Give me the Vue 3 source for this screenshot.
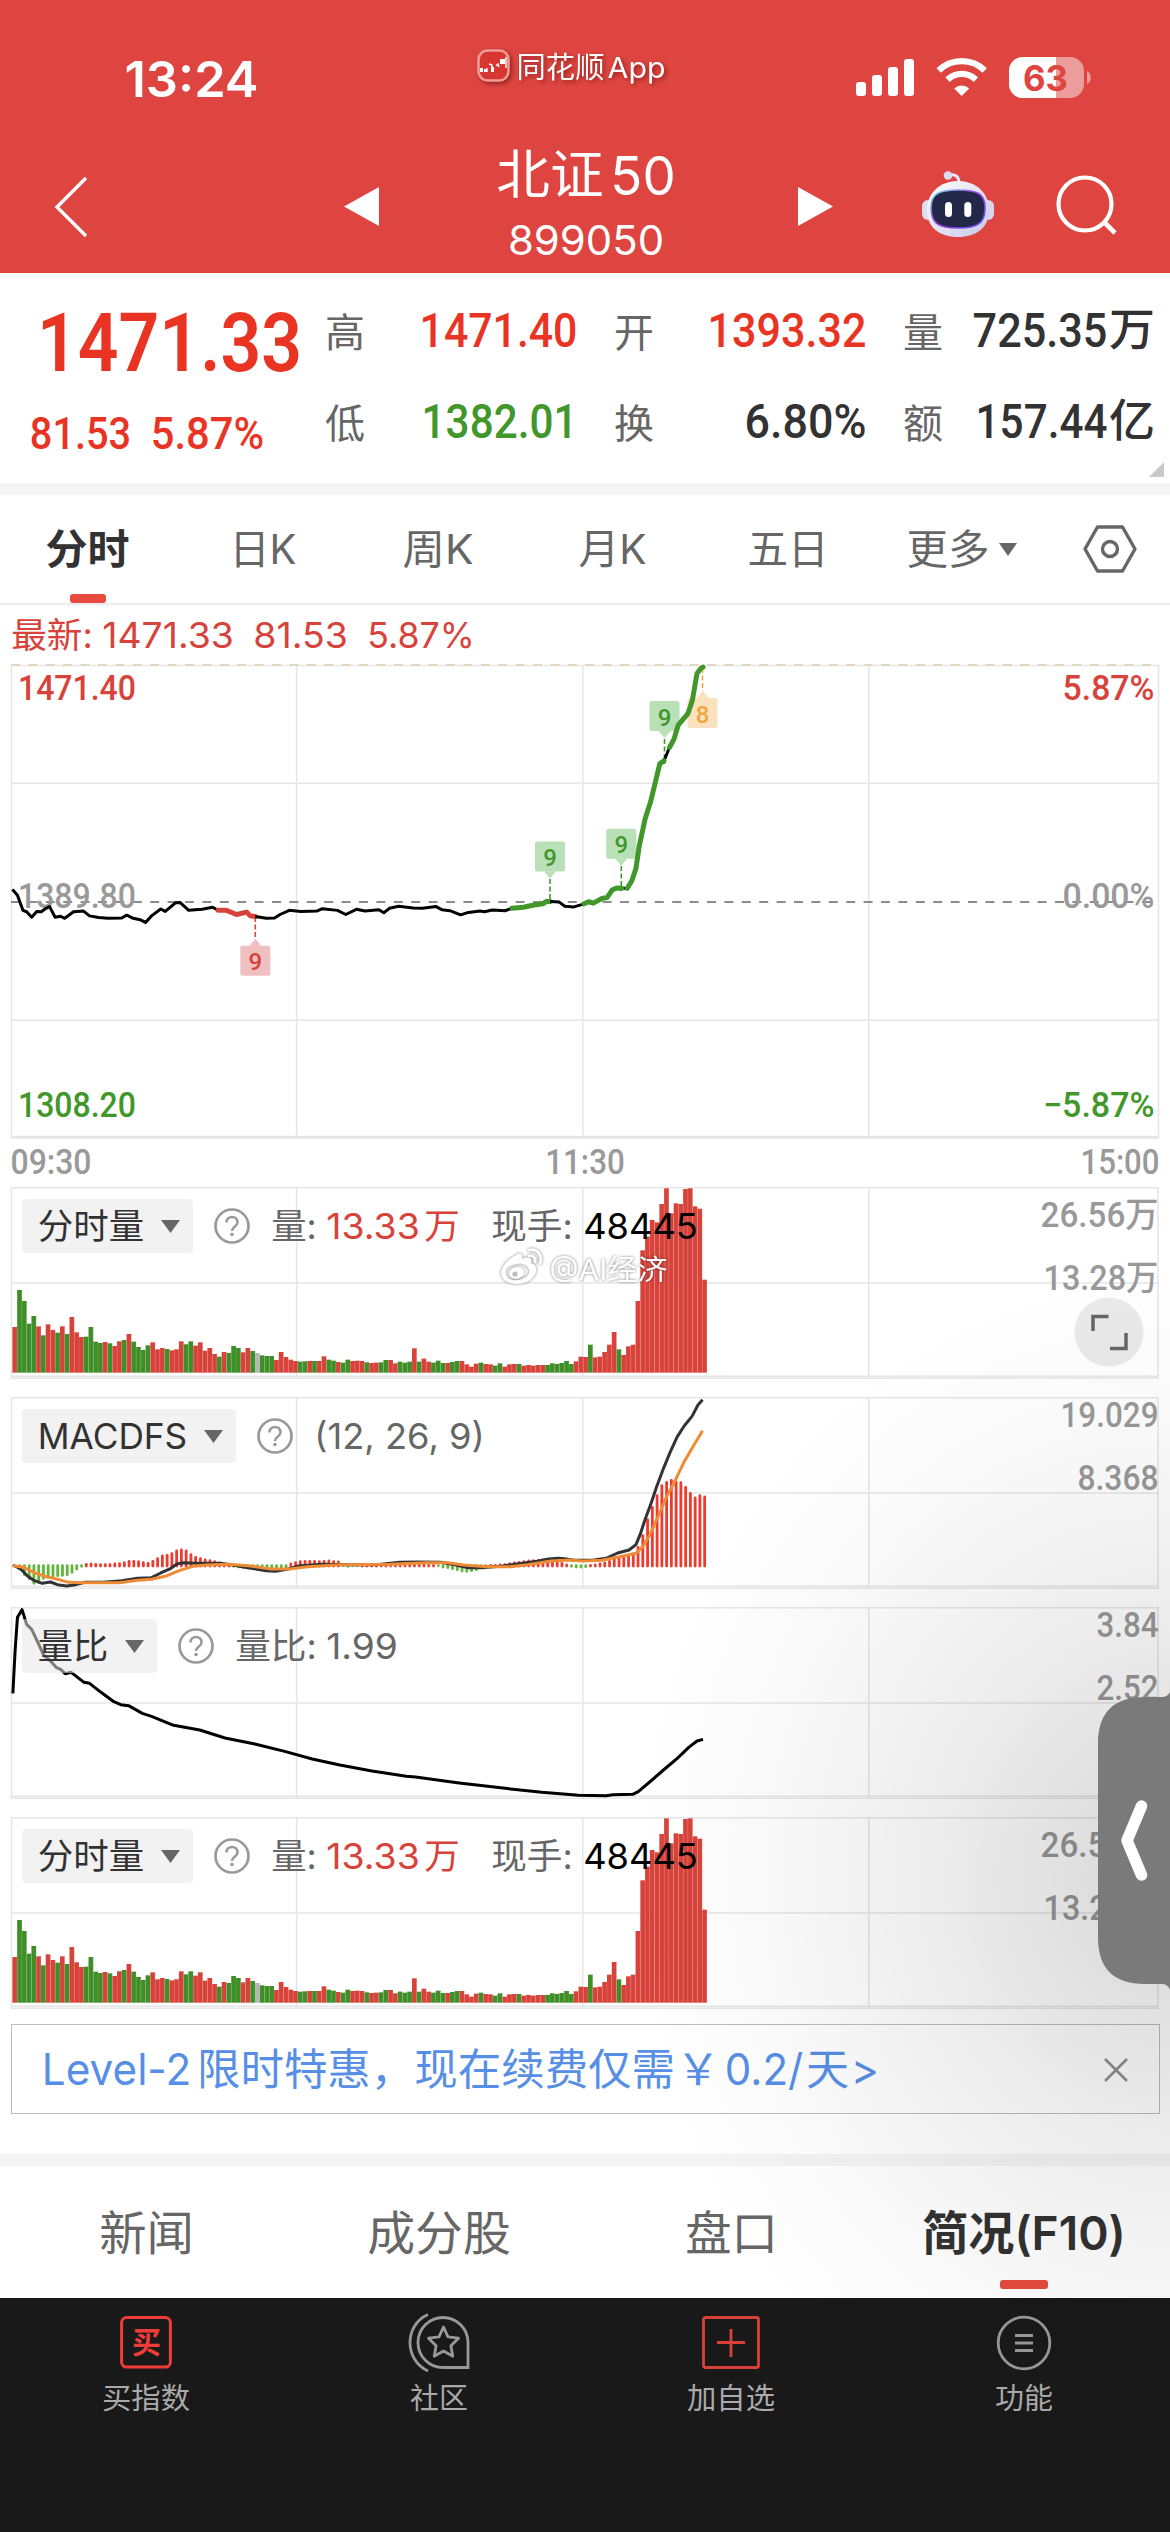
<script setup>
import { h } from 'vue'

// Text fitted to an exact width; the box height equals the cap height so rows align on it.
const Fit = (p) => {
  const size = Number(p.s)
  const b = p.b === undefined ? size * 0.05 : Number(p.b)
  const cap = size * 0.72
  return h('svg', { class: 'fit', width: p.w, height: cap }, [
    h('text', {
      x: -b, y: cap, 'font-size': size, fill: 'currentColor',
      textLength: Number(p.w) + 2 * b, lengthAdjust: 'spacingAndGlyphs',
    }, p.t),
  ])
}
Fit.props = ['t', 'w', 's', 'b']

const stats = [
  { k: '高', v: '1471.40', w: 153, c: 'up' },
  { k: '开', v: '1393.32', w: 154, c: 'up' },
  { k: '量', v: '725.35', w: 130, u: '万', c: 'ink' },
  { k: '低', v: '1382.01', w: 151, c: 'down' },
  { k: '换', v: '6.80%', w: 117, c: 'ink' },
  { k: '额', v: '157.44', w: 127, u: '亿', c: 'ink' },
]

const tabs = [
  { t: '分时', w: 81, on: true }, { t: '日K', w: 64 }, { t: '周K', w: 68 },
  { t: '月K', w: 65 }, { t: '五日', w: 78 }, { t: '更多', w: 80, more: true },
]
const infoTabs = [
  { t: '新闻', w: 91 }, { t: '成分股', w: 140 }, { t: '盘口', w: 89 }, { t: '简况(F10)', w: 200, on: true },
]

const segments = [
  ['k', '27,695 38,712 50,756 58,760 69,776 80,759 90,760 100,750 108,745 120,776 132,773 141,779 160,760 182,758 195,772 215,777 235,779 265,778 276,770 290,779 305,783 317,791 330,772 350,752 360,759 382,734 392,733 411,756 440,753 463,747 475,756'],
  ['r', '475,756 493,756 515,768 537,761 545,772 556,774'],
  ['k', '556,774 580,779 598,778 610,768 630,756 655,759 690,758 702,751 735,756 753,768 776,753 795,758 825,754 836,763 848,750 868,744 900,749 920,750 950,745 962,754 980,757 1003,769 1020,762 1045,758 1055,760 1072,755 1100,757 1115,750'],
  ['g', '1115,750 1140,747 1160,741 1182,737 1190,730 1198,730'],
  ['k', '1198,730 1218,732 1230,744 1250,746 1272,737'],
  ['k', '1354,692 1366,692'],
  ['k', '1446,322 1458,283'],
  ['g', '1272,737 1282,731 1292,735 1312,721 1322,719 1333,697 1343,691 1354,692'],
  ['g', '1366,692 1376,670 1385,634 1392,570 1405,490 1417,440 1427,385 1437,330 1446,322'],
  ['g', '1458,283 1468,258 1477,218 1498,185 1508,145 1518,68 1526,54 1531,50'],
]

// x, box top, pointer direction, dashed stem range
const marks = [
  { x: 550, y: 177.5, up: false, a: 215, b: 237, n: '9', c: 'mg' },
  { x: 621.3, y: 164.7, up: false, a: 202, b: 224, n: '9', c: 'mg' },
  { x: 664.5, y: 37, up: false, a: 75, b: 97, n: '9', c: 'mg' },
  { x: 702.5, y: 34, up: true, a: 4, b: 27, n: '8', c: 'mo' },
  { x: 255.3, y: 281.8, up: true, a: 253, b: 275, n: '9', c: 'mr' },
]

const tops = [471, 360, 393, 461, 438, 469, 496, 463, 480, 488, 469, 492, 441, 487, 501, 500, 471, 515, 519, 516,
  520, 528, 514, 510, 492, 515, 531, 540, 526, 517, 538, 534, 537, 541, 538, 514, 523, 514, 527, 517,
  542, 534, 552, 560, 546, 549, 528, 534, 547, 534, 543, 549, 556, 558, 558, 570, 546, 561, 569, 573,
  575, 574, 573, 573, 573, 559, 569, 572, 576, 578, 569, 573, 572, 573, 577, 579, 578, 577, 570, 570,
  580, 575, 578, 575, 535, 575, 566, 575, 578, 572, 579, 579, 576, 573, 573, 583, 590, 581, 578, 582,
  583, 587, 580, 590, 583, 582, 582, 587, 585, 587, 585, 585, 585, 580, 582, 579, 573, 582, 574, 560,
  561, 524, 562, 560, 546, 524, 486, 538, 555, 529, 524, 393, 241, 200, 150, 157, 102, 55, 130, 100,
  102, 57, 55, 109, 116, 329]
const kinds = 'RGGGGRGRRGRGRRRGGGGRGRRGRGGGGRRRGRRRGGRRRRRGRGGGRRGNGGGRRRRRGGRGRRGGRGGRRRGRRGGRRGGGRGRRGGGRGGRRRRGRRGGRRRGRRRRRGGGGGGRRRGRRRRRGRRRRRRRRRRRRRRRRR'
const STEP = 4.757
const volume = tops.map((t, i) => ({
  x: 12.4 + i * STEP, y: t / 3 - 17, hgt: (608 - t) / 3,
  c: kinds[i] === 'G' ? '#3f8e27' : kinds[i] === 'N' ? '#b5b5b5' : '#d7433a',
}))

const macdTips = [0, 1200, 1217, 1229, 1243, 1240, 1228, 1225, 1221, 1220, 1219, 1217, 1210, 1200, 1192, 1181, 1180, 1181, 1182, 1182,
  1182, 1180, 1179, 1176, 1172, 1172, 1173, 1176, 1178, 1172, 1164, 1156, 1154, 1149, 1141, 1138, 1141, 1152, 1160, 1164,
  1168, 1170, 1173, 1177, 1180, 1184, 1192, 1194, 1196, 1197, 1199, 1201, 1203, 1204, 1205, 1204, 1200, 1194, 1180, 1176,
  1173, 1172, 1172, 1172, 1173, 1172, 1171, 1173, 1174, 1190, 1192, 1190, 1189, 1184, 1184, 1184, 1184, 1184, 1184, 1184,
  1184, 1183, 1183, 1183, 1183, 1183, 1183, 1184, 1184, 1190, 1194, 1196, 1199, 1202, 1206, 1207, 1205, 1202, 1194, 1191,
  1184, 1184, 1183, 1182, 1179, 1177, 1175, 1173, 1171, 1170, 1169, 1168, 1168, 1170, 1172, 1178, 1183, 1192, 1194, 1194,
  1193, 1184, 1183, 1180, 1177, 1172, 1165, 1162, 1160, 1155, 1150, 1130, 1095, 1047, 1010, 975, 945, 935, 929, 934,
  936, 950, 968, 982, 975, 979]
const macdBars = macdTips.map((t, i) => ({ x: 14.9 + i * STEP, t, neg: t > 1187 })).filter((d) => d.t)
  .map((d) => ({ x: d.x, y1: (d.neg ? 1187 : 1188) / 3 - 227, y2: (d.neg ? d.t - 3 : d.t + 2) / 3 - 227, c: d.neg ? '#62b63a' : '#ed3b2f' }))

const dif = '28,1185 45,1197 60,1218 75,1232 92,1240 110,1236 125,1244 145,1248 165,1244 185,1237 225,1237 265,1232 300,1225 330,1223 350,1209 370,1197 385,1182 400,1178 430,1180 480,1180 510,1186 540,1193 580,1202 600,1204 625,1198 650,1188 700,1183 760,1184 820,1184 870,1177 910,1176 960,1177 990,1184 1020,1193 1050,1193 1090,1189 1130,1181 1170,1174 1195,1167 1215,1165 1230,1166 1250,1171 1290,1171 1320,1165 1345,1149 1370,1140 1385,1124 1395,1090 1405,1048 1418,1000 1430,950 1445,895 1460,845 1475,800 1490,768 1507,739 1520,705 1530,689'
const dea = '28,1187 50,1191 75,1208 95,1218 120,1226 150,1237 180,1238 260,1238 300,1231 330,1228 360,1219 390,1202 420,1189 450,1185 500,1183 540,1187 590,1197 630,1197 670,1190 740,1184 850,1183 930,1178 975,1178 1010,1185 1060,1190 1110,1190 1150,1184 1200,1173 1240,1170 1270,1173 1310,1171 1350,1160 1385,1150 1400,1130 1415,1095 1430,1050 1450,985 1470,933 1490,875 1510,828 1530,782'
const ratio = '28,310 33,180 38,82 48,59 58,103 69,118 85,165 95,195 110,213 122,232 132,238 142,251 155,247 183,277 195,280 220,307 248,335 263,344 280,347 310,370 330,379 378,406 435,420 490,444 555,462 620,484 680,507 740,525 810,543 885,559 905,561 1000,579 1100,595 1180,607 1260,616 1320,617 1335,614 1378,613 1390,605 1420,570 1450,534 1475,505 1500,472 1518,453 1531,448'

const panels = [
  { id: 'vol', name: '分时量', nw: 104, hi: ['26.56万', 115], lo: ['13.28万', 112], zoom: true, mark: true },
  { id: 'macd', name: 'MACDFS', nw: 147, hi: ['19.029', 95], lo: ['8.368', 78] },
  { id: 'ratio', name: '量比', nw: 68, hi: ['3.84', 59], lo: ['2.52', 59] },
  { id: 'vol', name: '分时量', nw: 104, hi: ['26.56万', 115], lo: ['13.28万', 112] },
]
</script>

<template>
  <div class="page">
    <header class="head">
      <div class="status">
        <Fit class="clock" t="13:24" w="129" s="50" />
        <div class="source">
          <svg width="34" height="34" viewBox="0 0 34 34">
            <rect x="1.5" y="1.5" width="30" height="30" rx="9" fill="#d83631" stroke="#ef9c98" stroke-width="2.6" />
            <path d="M3 19h3v4H3zM7 20h3v3H7zM14 18h3v5h-3zM23 10h5v5h-5z" fill="#fff" />
            <path d="M10 23V19M12 15l3 1v3M19 17l2-2 1 3M29 8v11" stroke="#fff" stroke-width="1.4" fill="none" />
          </svg>
          <Fit t="同花顺" w="85" s="29" /><Fit t="App" w="55" s="29" />
        </div>
        <svg class="sys" width="236" height="42" viewBox="0 0 236 42">
          <g fill="#fff">
            <rect x="0" y="25" width="10" height="14" rx="3" /><rect x="16" y="18" width="10" height="21" rx="3" />
            <rect x="32" y="10" width="10" height="29" rx="3" /><rect x="48" y="2" width="10" height="37" rx="3" />
            <path d="M105.7 39l-7.5-7.5a11 11 0 0 1 15 0z" />
          </g>
          <g fill="none" stroke="#fff" stroke-width="6.4">
            <path d="M82.7 13.5a33 33 0 0 1 46 0" /><path d="M91.5 22.6a20.5 20.5 0 0 1 28.4 0" />
          </g>
          <rect x="153" y="0" width="75" height="41" rx="14" fill="#ec9c9a" />
          <path d="M200 0H167a14 14 0 0 0-14 14v13a14 14 0 0 0 14 14h33z" fill="#fff" />
          <path d="M231 14c5 2 5 11 0 13z" fill="#ec9c9a" />
          <text x="167" y="33.6" font-size="35.5" font-weight="700" fill="#de4540" textLength="45" lengthAdjust="spacingAndGlyphs">63</text>
        </svg>
      </div>
      <div class="titlebar">
        <svg class="back" width="36" height="62" viewBox="0 0 36 62"><path d="M32 2L3 31l29 29" fill="none" stroke="#fff" stroke-width="3.4" /></svg>
        <svg class="prev" width="36" height="40"><path d="M35 0v39L0 19.5z" fill="#fff" /></svg>
        <div class="name">
          <div class="name-row"><Fit t="北证" w="102" s="53" /><Fit t="50" w="60" s="53.5" /></div>
          <Fit t="899050" w="152" s="41.5" />
        </div>
        <svg class="next" width="36" height="40"><path d="M0 0v39L35 19.5z" fill="#fff" /></svg>
        <svg class="bot" width="74" height="68" viewBox="0 0 74 68">
          <defs>
            <linearGradient id="shell" x1="0" y1="0" x2="1" y2="1"><stop offset="0" stop-color="#fff" /><stop offset=".5" stop-color="#e4e3f6" /><stop offset="1" stop-color="#c9c9ea" /></linearGradient>
            <linearGradient id="rim" x1="0" y1="0" x2="1" y2="1"><stop offset="0" stop-color="#7ce6f5" /><stop offset=".5" stop-color="#9a3ee0" /><stop offset="1" stop-color="#5a50f0" /></linearGradient>
          </defs>
          <path d="M29 5c6-1 9 2 9 8" fill="none" stroke="#e8e8f8" stroke-width="3" /><circle cx="27" cy="5.5" r="4.3" fill="#dcdcf2" />
          <rect x="1" y="30" width="12" height="20" rx="6" fill="#dedef2" /><rect x="61" y="30" width="12" height="20" rx="6" fill="#d6d6ee" />
          <path d="M37 11c18 0 31 12 31 29 0 18-13 27-31 27S6 58 6 40c0-17 13-29 31-29z" fill="url(#shell)" />
          <path d="M37 20c20 0 27 4 27 18 0 15-7 20-27 20s-27-5-27-20c0-14 7-18 27-18z" fill="#232748" stroke="url(#rim)" stroke-width="1.6" />
          <rect x="24" y="32" width="7" height="15" rx="3.5" fill="#fff" /><rect x="43.3" y="32" width="7" height="15" rx="3.5" fill="#fff" />
        </svg>
        <svg class="find" width="62" height="62" viewBox="0 0 62 62"><circle cx="29" cy="29" r="26.5" fill="none" stroke="#fff" stroke-width="4.2" /><path d="M48 47l11 11" stroke="#fff" stroke-width="4.6" /></svg>
      </div>
    </header>

    <section class="quote num">
      <div class="last up">
        <Fit class="price" t="1471.33" w="261" s="81.5" b="2" />
        <div class="delta"><Fit t="81.53" w="97" s="43.5" /><Fit t="5.87%" w="109" s="43.5" /></div>
      </div>
      <div class="stats">
        <div v-for="s in stats" :key="s.k" class="stat">
          <Fit class="key" :t="s.k" w="38" s="40" b="1" />
          <div class="val" :class="s.c">
            <Fit :t="s.v" :w="s.w" s="48" /><Fit v-if="s.u" class="unit" :t="s.u" w="44" s="45" b="1" />
          </div>
        </div>
      </div>
      <svg class="corner" width="15" height="15"><path d="M15 0v15H0z" fill="#c9c9c9" /></svg>
    </section>

    <nav class="tabs">
      <div v-for="t in tabs" :key="t.t" class="tab" :class="{ on: t.on }">
        <Fit :t="t.t" :w="t.w" s="41" b="1.5" />
        <svg v-if="t.more" class="caret" width="18" height="13"><path d="M0 0h18l-9 13z" fill="#666" /></svg>
      </div>
      <div class="gear">
        <svg width="54" height="48" viewBox="0 0 54 48"><path d="M14.5 2h25L52 24 39.5 46h-25L2 24z" fill="none" stroke="#666" stroke-width="3.4" stroke-linejoin="round" /><circle cx="27" cy="24" r="7.5" fill="none" stroke="#666" stroke-width="3.4" /></svg>
      </div>
    </nav>

    <div class="latest">
      <Fit t="最新:" w="78" s="35.5" /><Fit class="a" t="1471.33" w="128" s="35.5" /><Fit class="b" t="81.53" w="91" s="35.5" /><Fit class="b" t="5.87%" w="104" s="35.5" />
    </div>

    <svg class="chart num" width="1170" height="475">
      <g class="grid">
        <path d="M11.5 119.3H1159M11.5 356.3H1159M296.6 1V474M582.7 1V474M868.8 1V474" />
        <path d="M11.5 1.5H1158.5V474H11.5zM11.5 472.5H1158.5" />
      </g>
      <path d="M11 .8H1158" stroke="#dccba6" stroke-width="1.2" stroke-dasharray="9 8.4" />
      <path d="M11 238H1153" stroke="#8c8c8c" stroke-width="2" stroke-dasharray="9 8.4" />
      <g font-size="35.3" class="lab">
        <text x="18" y="36" fill="#d7433a" textLength="118" lengthAdjust="spacingAndGlyphs">1471.40</text>
        <text x="18" y="243.5" fill="#999" textLength="118" lengthAdjust="spacingAndGlyphs">1389.80</text>
        <text x="18" y="452.5" fill="#41972a" textLength="118" lengthAdjust="spacingAndGlyphs">1308.20</text>
        <text x="1062.5" y="36" fill="#d7433a" textLength="92" lengthAdjust="spacingAndGlyphs">5.87%</text>
        <text x="1062.5" y="243.5" fill="#999" textLength="92" lengthAdjust="spacingAndGlyphs">0.00%</text>
        <text x="1043" y="452.5" fill="#41972a" textLength="111.5" lengthAdjust="spacingAndGlyphs">−5.87%</text>
      </g>
      <g v-for="m in marks" :key="m.x" :class="m.c">
        <path class="stem" :d="`M${m.x} ${m.a}V${m.b + (m.up ? 0 : 3)}`" />
        <rect :x="m.x - 15" :y="m.y" width="30" height="30" rx="2" />
        <path class="tip" :d="m.up ? `M${m.x - 6} ${m.y}l6 -7l6 7z` : `M${m.x - 6} ${m.y + 30}l6 7l6 -7z`" />
        <text class="dig" :x="m.x" :y="m.y + 24.5" font-size="24" text-anchor="middle">{{ m.n }}</text>
      </g>
      <g transform="translate(0 -14) scale(.45918 .3444)">
        <polyline v-for="(s, i) in segments" :key="i" :class="'s' + s[0]" :points="s[1]" />
      </g>
    </svg>
    <div class="axis num"><Fit t="09:30" w="78" s="35.5" b="1.5" /><Fit t="11:30" w="76" s="35.5" /><Fit t="15:00" w="76" s="35.5" b="1.5" /></div>

    <section v-for="(p, i) in panels" :key="i" class="panel">
      <svg class="plot" width="1170" height="192">
        <g class="grid">
          <path d="M11.5 96H1159M296.6 1V191M582.7 1V191M868.8 1V191" />
          <path d="M11.5 .8H1158V191.3H11.5zM11.5 189.3H1158" />
        </g>
        <g v-if="p.id === 'vol'">
          <rect v-for="(v, j) in volume" :key="j" :x="v.x" :y="v.y" :width="STEP" :height="v.hgt" :fill="v.c" />
          <path v-for="(v, j) in volume" :key="'l' + j" :d="`M${v.x + STEP} ${v.y + 1}v${v.hgt - 1}`" stroke="#fff" stroke-opacity=".12" />
        </g>
        <template v-if="p.id === 'macd'">
          <path v-for="(m, j) in macdBars" :key="j" :d="`M${m.x} ${m.y1}V${m.y2}`" :stroke="m.c" stroke-width="2.8" stroke-linecap="round" />
          <g transform="translate(0 -227) scale(.45918 .33333)">
            <polyline class="ind dif" :points="dif" /><polyline class="ind dea" :points="dea" />
          </g>
        </template>
        <g v-if="p.id === 'ratio'" transform="translate(0 -17) scale(.45918 .33333)"><polyline class="ind" :points="ratio" /></g>
        <g class="num lab" font-size="35.5" fill="#999">
          <text :x="1155.5 - p.hi[1]" :y="p.id === 'vol' ? 39.7 : 30.2" :textLength="p.hi[1] + 3" lengthAdjust="spacingAndGlyphs">{{ p.hi[0] }}</text>
          <text :x="1155.5 - p.lo[1]" :y="p.id === 'vol' ? 102.7 : 93" :textLength="p.lo[1] + 3" lengthAdjust="spacingAndGlyphs">{{ p.lo[0] }}</text>
        </g>
      </svg>
      <div class="legend">
        <div class="chip"><Fit :t="p.name" :w="p.nw" s="35.5" b="1.2" /><svg width="19" height="13"><path d="M0 0h19l-9.5 13z" fill="#666" /></svg></div>
        <svg class="help" width="38" height="38" viewBox="0 0 38 38"><circle cx="19" cy="19" r="16.5" fill="none" stroke="#999" stroke-width="2.7" /><path d="M13.5 15.5c0-7.5 11-7.5 11 0 0 4-5.5 4-5.5 8.5" fill="none" stroke="#999" stroke-width="2.5" /><circle cx="19" cy="27.5" r="1.8" fill="#999" /></svg>
        <template v-if="p.id === 'vol'">
          <Fit t="量:" w="42" s="35.5" /><Fit class="red g1" t="13.33" w="90" s="35.5" /><Fit class="red g2" t="万" w="32" s="35.5" />
          <Fit class="g3" t="现手:" w="78" s="35.5" /><Fit class="blk g4" t="48445" w="111" s="35.5" />
        </template>
        <Fit v-if="p.id === 'macd'" t="(12, 26, 9)" w="167" s="35.5" />
        <template v-if="p.id === 'ratio'"><Fit t="量比:" w="78" s="35.5" /><Fit class="g1" t="1.99" w="68" s="35.5" /></template>
      </div>
      <svg v-if="p.zoom" class="expand" width="70" height="70" viewBox="0 0 70 70"><circle cx="35" cy="35" r="34.5" fill="#eaeaea" /><path d="M19 34V19.5h15.5M52 36v15.5H36" fill="none" stroke="#666" stroke-width="3.5" /></svg>
      <div v-if="p.mark" class="wm">
        <svg width="44" height="38" viewBox="0 0 44 38">
          <g fill="#fff"><path fill-rule="evenodd" d="M16 8c4-3 8-1 6 4 6-3 11-1 9 4 4 1 6 4 5 9-2 7-9 12-19 12C7 37 1 32 1 26 1 20 8 12 16 8zM17 17C9 18 5 22 6 27c1 5 6 7 12 6 8-1 12-6 11-10-1-4-6-7-12-6z" /><path d="M16 20c-5 1-8 5-6 9 2 3 7 4 11 1 4-2 4-6 2-8-2-2-4-2-7-2z" /></g>
          <circle cx="15" cy="27" r="2.6" fill="#bbb" />
          <path d="M29 3c8-2 14 5 11 13M29 9c4-1 7 2 6 6" fill="none" stroke="#fff" stroke-width="2.8" stroke-linecap="round" />
        </svg>
        <Fit t="@AI经济" w="115" s="28.5" />
      </div>
    </section>

    <div class="promo">
      <Fit t="Level-2" w="145" s="43.5" /><Fit class="p1" t="限时特惠，现在续费仅需" w="476" s="43.5" b="1" />
      <Fit class="p2" t="￥" w="44" s="43.5" b="0" /><Fit class="p3" t="0.2/" w="74" s="43.5" /><Fit class="p4" t="天" w="41" s="43.5" b="1" /><Fit class="p5" t="&gt;" w="24" s="43.5" />
      <svg class="x" width="24" height="24"><path d="M1 1l22 22M23 1L1 23" stroke="#8f8f8f" stroke-width="2.6" /></svg>
    </div>

    <nav class="itabs">
      <div v-for="t in infoTabs" :key="t.t" class="itab" :class="{ on: t.on }"><Fit :t="t.t" :w="t.w" s="47" b="1.8" /></div>
    </nav>

    <footer class="foot">
      <div class="fi">
        <svg width="52" height="54" viewBox="0 0 52 54"><rect x="1.6" y="1.6" width="48.8" height="49.5" rx="5" fill="none" stroke="#f03c38" stroke-width="3" /><text x="12" y="37" font-size="30" font-weight="700" fill="#f03c38" textLength="29" lengthAdjust="spacingAndGlyphs">买</text></svg>
        <Fit t="买指数" w="86" s="29" b="1" />
      </div>
      <div class="fi">
        <svg width="62" height="60" viewBox="0 0 62 60"><g fill="none" stroke="#999" stroke-width="2.8"><path d="M35 4.5a25 25 0 1 0 0 50h25v-25a25 25 0 0 0-25-25z" /><path d="M20 1.5C-4 12-4 47 20 58" /><path stroke-linejoin="round" d="M35.5 14l4.5 9.800 10.500 1.400-7.600 7.500 1.900 10.500-9.300-5.100-9.300 5.100 1.900-10.500-7.600-7.500 10.500-1.400z" /></g></svg>
        <Fit t="社区" w="56" s="29" b="1" />
      </div>
      <div class="fi">
        <svg width="58" height="54" viewBox="0 0 58 54"><rect x="1.5" y="1.5" width="55" height="50" rx="2" fill="none" stroke="#d9403a" stroke-width="2.8" /><path d="M29 13v28M15 26.500h28" stroke="#d9403a" stroke-width="2.8" /></svg>
        <Fit t="加自选" w="86" s="29" b="1" />
      </div>
      <div class="fi">
        <svg width="56" height="56" viewBox="0 0 56 56"><circle cx="28" cy="28" r="25.8" fill="none" stroke="#999" stroke-width="2.8" /><path d="M19 20.500h18M19 28h18M19 35.500h18" stroke="#999" stroke-width="2.8" /></svg>
        <Fit t="功能" w="56" s="29" b="1" />
      </div>
    </footer>

    <div class="shade"></div>
    <svg class="drawer" width="73" height="306" viewBox="0 0 73 306">
      <path d="M73 0C72 6 69 9 64 9H47C15 9 0 25 0 56V249c0 31 15 47 47 47H64c5 0 8 3 9 10z" fill="#7a7a7a" />
      <path d="M43.5 118L29 152.5 43.5 187" fill="none" stroke="#fff" stroke-width="11.5" stroke-linecap="round" stroke-linejoin="round" />
    </svg>
  </div>
</template>

<style>
body { margin: 0; background: #fff; }
</style>

<style scoped>
.page { position: relative; width: 1170px; height: 2532px; display: flex; flex-direction: column; overflow: hidden; background: #fff; color: #666; font-family: Inter, "Noto Sans CJK SC", sans-serif; }
.page > * { flex: none; box-sizing: border-box; }
svg { display: block; flex: none; }
.fit { overflow: visible; }
.num { font-family: Roboto, "Noto Sans CJK SC", sans-serif; font-weight: 500; }
.up { color: #ea3423; }
.down { color: #41972a; }
.ink { color: #323232; }
.red { color: #d7433a; }
.blk { color: #000; }

.head { height: 273px; background: #de4540; color: #fff; }
.status { height: 150px; padding: 57px 0 0 127px; box-sizing: border-box; display: flex; align-items: flex-start; }
.clock { margin-top: 3.5px; font-weight: 600; }
.source { margin: -8px 0 0 221px; display: flex; align-items: center; gap: 6px; width: 189px; filter: drop-shadow(2px 2px 2px rgba(90, 0, 0, .55)); }
.source svg:first-child { margin-right: 1px; }
.source .fit { margin-top: 3px; }
.sys { margin-left: 190px; }
.titlebar { display: flex; align-items: flex-start; height: 123px; }
.back { margin: 26px 0 0 54px; }
.prev { margin: 37px 0 0 254px; }
.name { display: flex; flex-direction: column; align-items: center; width: 176px; margin: 6px 0 0 118px; gap: 30px; }
.name-row { display: flex; gap: 12px; }
.next { margin: 37px 0 0 124px; }
.bot { margin: 20px 0 0 87px; }
.find { margin: 25px 0 0 61px; }

.quote { position: relative; height: 222px; border-bottom: 12px solid #f4f4f4; display: flex; }
.last { width: 326px; box-sizing: border-box; padding: 38.5px 0 0 32px; }
.price { margin-left: 7px; font-weight: 600; }
.delta { display: flex; gap: 24px; margin-top: 48px; }
.stats { display: grid; grid-template-columns: 249px 249px 250px; column-gap: 40px; row-gap: 56.5px; align-content: start; padding-top: 39px; }
.stat, .val { display: flex; justify-content: space-between; align-items: flex-end; }
.val { gap: 5px; }
.key { font-weight: 400; color: #666; }
.corner { position: absolute; right: 6px; bottom: 6px; }

.tabs { height: 110px; border-bottom: 2px solid #ededed; display: flex; }
.tab { position: relative; width: 175px; display: flex; align-items: center; justify-content: center; gap: 11px; }
.on { color: #323232; font-weight: 700; }
.tab.on::after, .itab.on::after { content: ""; position: absolute; left: 50%; bottom: 0; width: 36px; height: 9px; margin-left: -18px; border-radius: 3px; background: #e64b3d; }
.gear { width: 120px; display: flex; align-items: center; justify-content: center; }

.latest { height: 59px; padding: 17px 0 0 13px; display: flex; color: #d7433a; }
.latest .a { margin-left: 13px; }
.latest .b { margin-left: 23px; }

.grid path { fill: none; stroke: #e6e6e6; stroke-width: 1.6; }
.sk, .sr, .sg, .ind { fill: none; stroke: #000; stroke-width: 3; stroke-linejoin: round; vector-effect: non-scaling-stroke; }
.sg { stroke: #41972a; stroke-width: 5; stroke-linecap: round; }
.sr { stroke: #d7433a; stroke-width: 5; stroke-linecap: round; }
.dif { stroke: #333; }
.dea { stroke: #ef8a35; }
.stem { fill: none; stroke-width: 1.6; stroke-dasharray: 5 2.5; }
.mg { fill: #bae0b8; }
.mo { fill: #fae2bf; }
.mr { fill: #f0c0c0; }
.mg .stem { stroke: #41972a; }
.mo .stem { stroke: #f0a542; }
.mr .stem { stroke: #d7433a; }
.mg .dig { fill: #41972a; }
.mo .dig { fill: #f0a542; }
.mr .dig { fill: #d7433a; }

.axis { height: 48px; padding: 9px 12px 0; display: flex; justify-content: space-between; color: #999; }
.axis .fit:nth-child(2) { margin-right: 2px; }
.panel { position: relative; height: 192px; margin-bottom: 18px; }
.legend { position: absolute; left: 22px; top: 12px; height: 54px; display: flex; align-items: center; }
.chip { height: 54px; padding: 0 13px 0 17px; display: flex; align-items: center; gap: 18px; border-radius: 4px; background: rgba(231, 231, 231, .54); color: #323232; }
.help { margin: 0 22px 0 20px; }
.g1 { margin-left: 13px; }
.g2 { margin-left: 8px; }
.g3 { margin-left: 35px; }
.g4 { margin-left: 14px; }
.expand { position: absolute; left: 1073.5px; top: 110px; }
.wm { position: absolute; left: 500px; top: 60px; display: flex; align-items: center; gap: 7px; color: #fff; filter: drop-shadow(0 0 1.5px rgba(0, 0, 0, .5)); }
.wm .fit { margin-top: 7px; }

.promo { height: 90px; margin: -3px 10px 40px 11px; border: 1.5px solid #bdbdbd; display: flex; align-items: center; padding: 2px 0 0 32px; color: #578fe6; }
.p1 { margin-left: 9px; }
.p2 { margin-left: 2px; }
.p3 { margin-left: 7px; }
.p4 { margin-left: 6px; }
.p5 { margin-left: 5px; }
.x { margin-left: 227px; }

.itabs { height: 144px; border-top: 12px solid #f4f4f4; display: flex; }
.itab { position: relative; flex: 1; display: flex; justify-content: center; padding-top: 50px; }
.itab.on { font-weight: 600; }
.itab.on::after { width: 48px; margin-left: -24px; bottom: 9px; }

.foot { height: 234px; background: #191919; color: #aaa; display: flex; }
.fi { flex: 1; display: flex; flex-direction: column; align-items: center; padding-top: 15px; }
.fi > svg:first-child { height: 60px; }
.fi .fit { margin-top: 15px; }

.shade { position: absolute; left: 0; top: 0; width: 1170px; height: 2532px; pointer-events: none; background: radial-gradient(ellipse 540px 610px at 1170px 1880px, rgba(0, 0, 0, .15) 0, rgba(0, 0, 0, .13) 15%, rgba(0, 0, 0, .07) 45%, rgba(0, 0, 0, .03) 70%, rgba(0, 0, 0, 0) 100%); }
.drawer { position: absolute; right: -1px; top: 1688px; }
</style>
